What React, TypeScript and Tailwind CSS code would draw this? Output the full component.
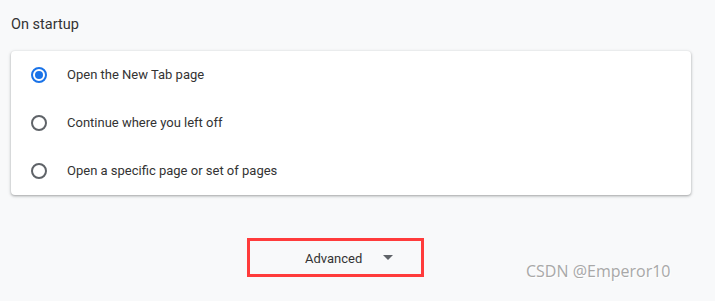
import React from "react";

const options = [
  { label: "Open the New Tab page", checked: true },
  { label: "Continue where you left off", checked: false },
  { label: "Open a specific page or set of pages", checked: false },
];

function Radio({ checked }: { checked: boolean }) {
  return (
    <span
      className={
        checked
          ? "w-4 h-4 rounded-full border-2 border-[#1a73e8] flex items-center justify-center"
          : "w-4 h-4 rounded-full border-2 border-[#5f6368]"
      }
    >
      {checked && <span className="w-2 h-2 rounded-full bg-[#1a73e8]" />}
    </span>
  );
}

export default function App() {
  return (
    <div className="relative w-[715px] h-[301px] bg-[#f8f9fa] font-['Roboto',sans-serif] text-[13px] text-[#202124] overflow-hidden">
      {/* Heading */}
      <div className="pl-[11px] pt-[16px] h-[51px] text-[14.5px] leading-[18px] text-[#333]">On startup</div>

      {/* Card */}
      <div className="ml-[11px] w-[680px] bg-white rounded-[4px] shadow-[0_1px_2px_rgba(60,64,67,0.3),0_1px_3px_1px_rgba(60,64,67,0.15)]">
        {options.map((o) => (
          <div key={o.label} className="h-12 flex items-center pl-[20px]">
            <div className="w-[36px] flex items-center">
              <Radio checked={o.checked} />
            </div>
            <span className="text-[#333]">{o.label}</span>
          </div>
        ))}
      </div>

      {/* Advanced */}
      <div className="mt-[43px] ml-[247px] w-[177px] h-[39px] border-[3px] border-[#ff3b3b] flex items-center">
        <span className="ml-[55px] mt-[2px] text-[#333]">Advanced</span>
        <svg className="ml-[21px]" width="10" height="5" viewBox="0 0 10 5">
          <path d="M0 0 L10 0 L5 5 Z" fill="#5f6368" />
        </svg>
      </div>

      {/* Watermark */}
      <div className="absolute left-[526px] top-[260px] font-['Open_Sans',sans-serif] text-[16px] leading-[22px] text-[#a8a8a8] [text-shadow:1px_1px_0_#fff]">
        CSDN @Emperor10
      </div>
    </div>
  );
}
